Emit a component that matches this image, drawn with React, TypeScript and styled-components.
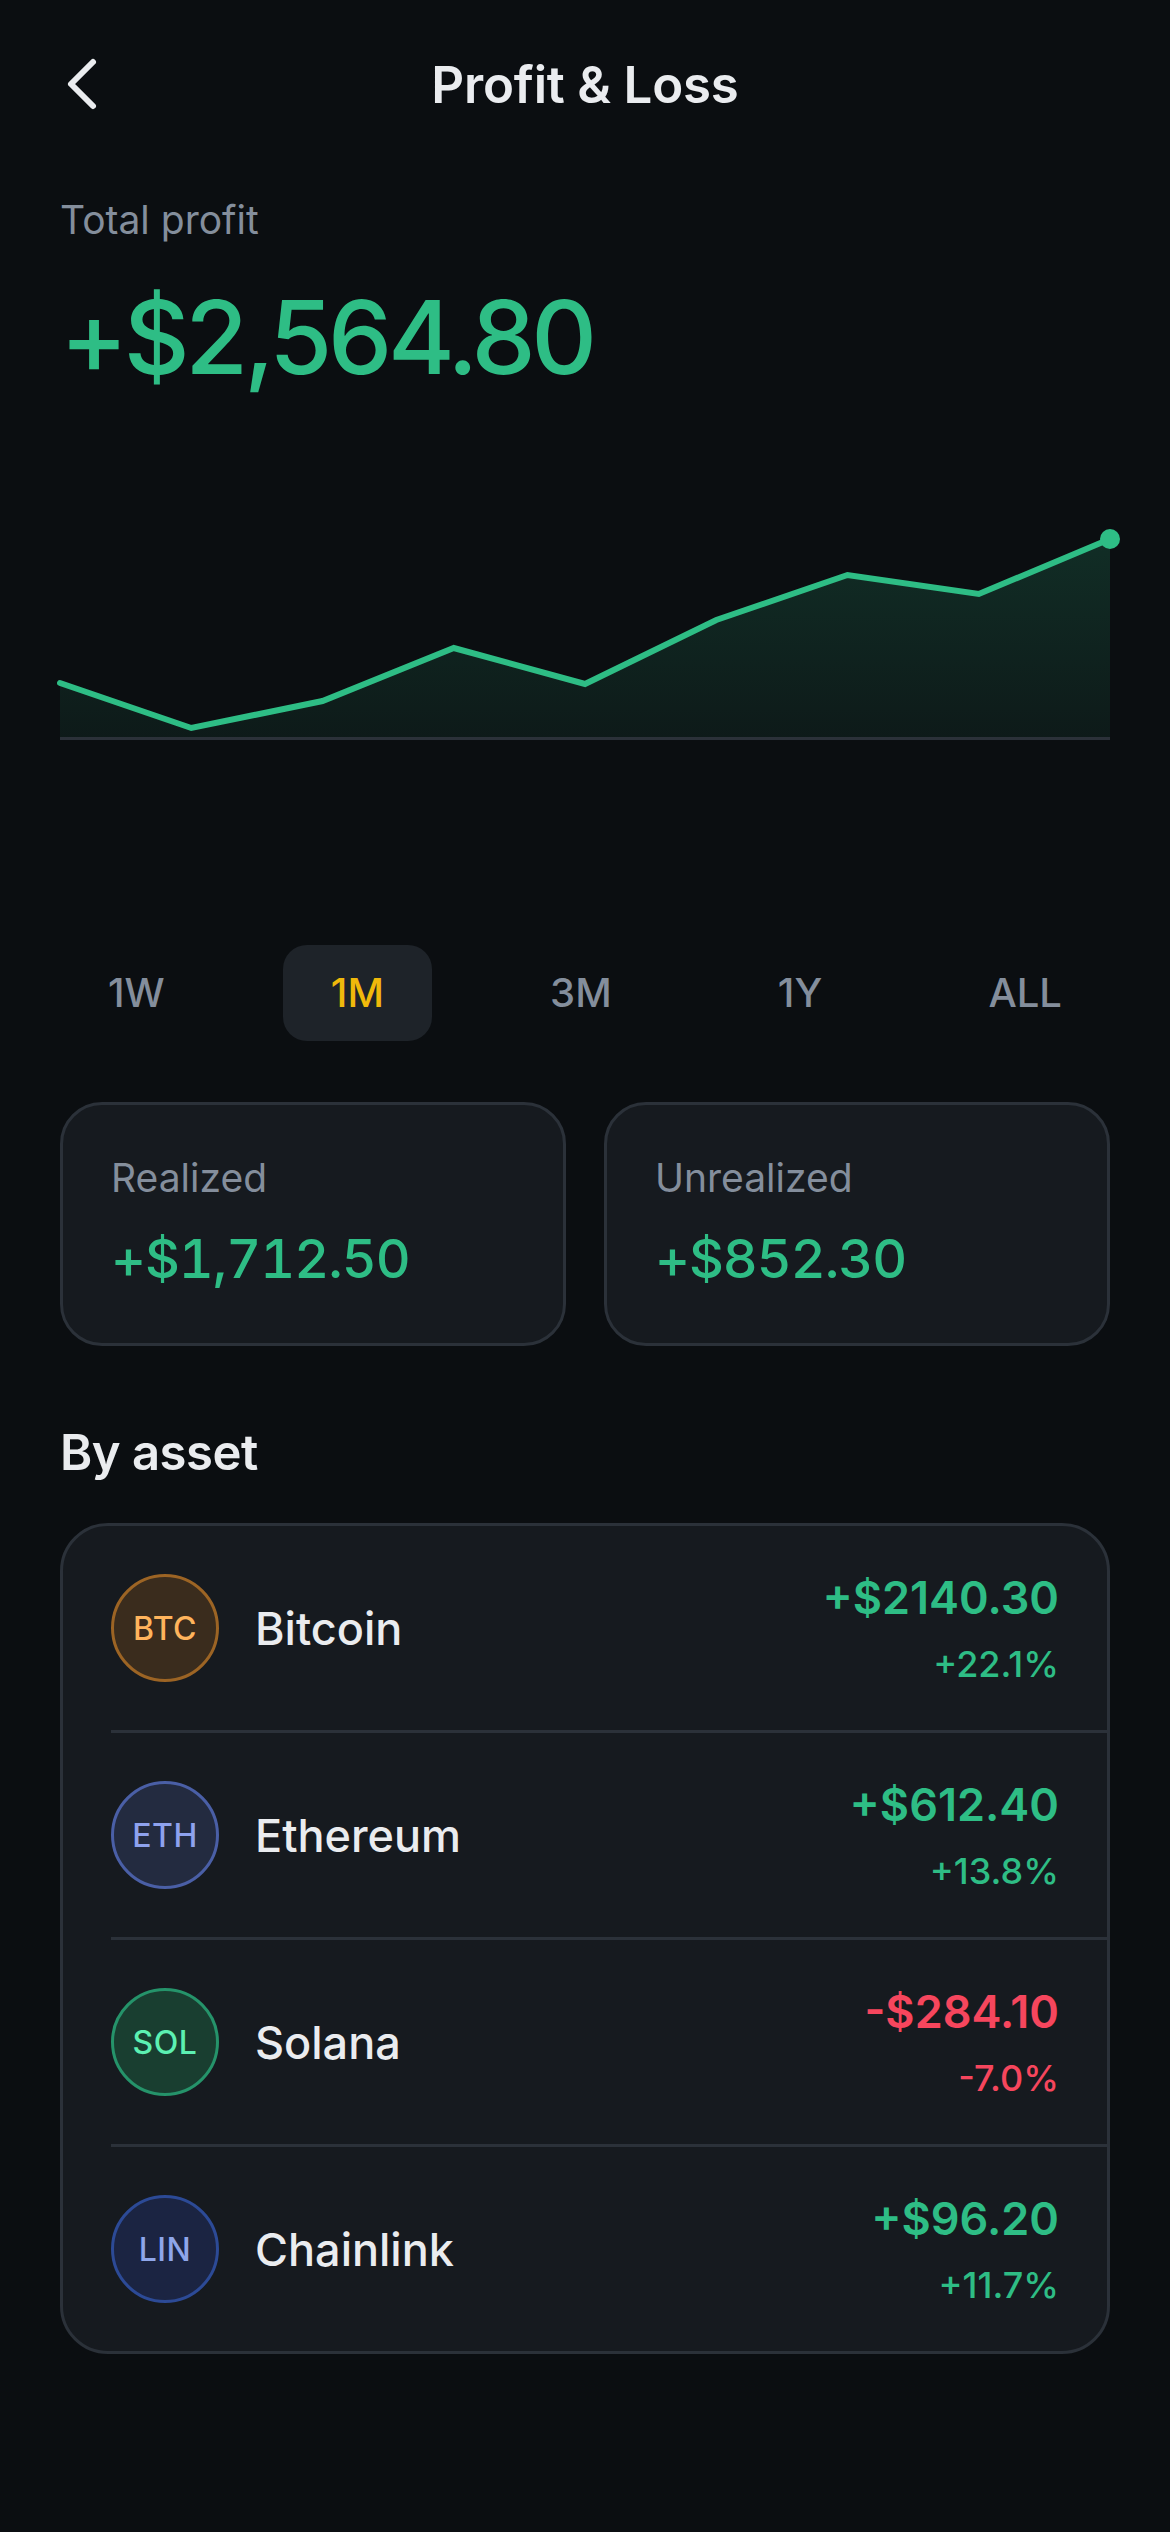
import React from "react";
import styled, { createGlobalStyle } from "styled-components";

const GlobalStyle = createGlobalStyle`
  html, body {
    margin: 0;
    padding: 0;
    background: #0b0e11;
  }
  body {
    font-family: Inter, "Noto Sans", "Liberation Sans", sans-serif;
    -webkit-font-smoothing: antialiased;
  }
  * { box-sizing: border-box; }
`;

const Page = styled.div`
  width: 1170px;
  min-height: 2532px;
  background: #0b0e11;
  padding: 0 60px;
  display: flex;
  flex-direction: column;
  color: #eaecef;
`;

const Header = styled.header`
  height: 168px;
  display: flex;
  align-items: center;
  justify-content: center;
  position: relative;
`;

const BackButton = styled.button`
  position: absolute;
  left: 0;
  top: 50%;
  transform: translateY(-50%);
  width: 60px;
  height: 60px;
  padding: 0;
  margin: 0;
  border: 0;
  background: transparent;
  display: flex;
  align-items: center;
  justify-content: flex-start;
  cursor: pointer;
`;

const Title = styled.h1`
  margin: 0;
  font-size: 51px;
  line-height: 1;
  font-weight: 600;
  color: #eaecef;
  letter-spacing: -0.2px;
`;

const Label = styled.div`
  font-size: 39px;
  line-height: 1;
  font-weight: 400;
  color: #848e9c;
`;

const TotalLabel = styled(Label)`
  margin-top: 32px;
`;

const BigAmount = styled.div`
  margin-top: 47px;
  font-size: 102px;
  line-height: 1;
  font-weight: 500;
  color: #2ebd85;
  letter-spacing: -4.3px;
`;

const ChartWrap = styled.div`
  margin-top: 12px;
  height: 360px;
  display: flex;
`;

const Tabs = styled.div`
  margin-top: 185px;
  display: flex;
  justify-content: space-between;
`;

const Tab = styled.button<{ $active?: boolean }>`
  height: 96px;
  padding: 0 48px;
  border: 0;
  border-radius: 24px;
  background: ${(p) => (p.$active ? "#1e2329" : "transparent")};
  color: ${(p) => (p.$active ? "#f0b90b" : "#848e9c")};
  font-family: inherit;
  font-size: 40px;
  font-weight: 500;
  line-height: 1;
  cursor: pointer;
`;

const StatsGrid = styled.div`
  margin-top: 61px;
  display: grid;
  grid-template-columns: 1fr 1fr;
  gap: 38px;
`;

const StatCard = styled.div`
  height: 244px;
  background: #161a1f;
  border: 3px solid #2b3139;
  border-radius: 42px;
  padding: 53px 48px 0;
  display: flex;
  flex-direction: column;
  gap: 35px;
`;

const StatValue = styled.div<{ $neg?: boolean }>`
  font-size: 54px;
  line-height: 1;
  font-weight: 500;
  font-variant-numeric: tabular-nums;
  letter-spacing: -1px;
  color: ${(p) => (p.$neg ? "#f6465d" : "#2ebd85")};
`;

const SectionTitle = styled.h2`
  margin: 82px 0 0;
  font-size: 49px;
  line-height: 1;
  font-weight: 600;
  letter-spacing: -0.5px;
  color: #eaecef;
`;

const AssetList = styled.div`
  margin-top: 46px;
  background: #161a1f;
  border: 3px solid #2b3139;
  border-radius: 48px;
  overflow: hidden;
`;

const AssetRow = styled.div<{ $last?: boolean }>`
  margin-left: 48px;
  height: ${(p) => (p.$last ? 204 : 207)}px;
  padding-right: 48px;
  display: flex;
  align-items: center;
  border-bottom: ${(p) => (p.$last ? "none" : "3px solid #2b3139")};
`;

const Coin = styled.div<{ $bg: string; $border: string; $fg: string }>`
  width: 108px;
  height: 108px;
  flex: 0 0 108px;
  border-radius: 50%;
  background: ${(p) => p.$bg};
  border: 3px solid ${(p) => p.$border};
  color: ${(p) => p.$fg};
  display: flex;
  align-items: center;
  justify-content: center;
  font-size: 32px;
  font-weight: 500;
  letter-spacing: 0.5px;
`;

const AssetName = styled.div`
  margin-left: 36px;
  flex: 1;
  font-size: 45px;
  line-height: 1;
  font-weight: 500;
  color: #eaecef;
`;

const AssetValues = styled.div`
  display: flex;
  flex-direction: column;
  align-items: flex-end;
  gap: 26px;
`;

const AssetAmount = styled.div<{ $neg?: boolean }>`
  font-size: 45px;
  line-height: 1;
  font-weight: 600;
  color: ${(p) => (p.$neg ? "#f6465d" : "#2ebd85")};
`;

const AssetPct = styled.div<{ $neg?: boolean }>`
  font-size: 36px;
  line-height: 1;
  font-weight: 500;
  color: ${(p) => (p.$neg ? "#f6465d" : "#2ebd85")};
`;

const ChevronLeft = () => (
  <svg width="40" height="56" viewBox="0 0 40 56" fill="none">
    <polyline
      points="33,6 11,28 33,50"
      stroke="#eaecef"
      strokeWidth="6"
      strokeLinecap="round"
      strokeLinejoin="round"
    />
  </svg>
);

const chartPoints = [283, 328, 301, 248, 284, 220, 175, 194, 139];

const ProfitChart = () => {
  const w = 1050;
  const base = 337;
  const step = w / (chartPoints.length - 1);
  const pts = chartPoints.map((y, i) => [i * step, y] as const);
  const line = pts.map(([x, y], i) => `${i === 0 ? "M" : "L"}${x.toFixed(1)},${y}`).join(" ");
  const area = `${line} L${w},${base} L0,${base} Z`;
  const last = pts[pts.length - 1];
  return (
    <svg width="1050" height="360" viewBox="0 0 1050 360" style={{ overflow: "visible" }}>
      <defs>
        <linearGradient id="pnlFill" x1="0" y1="0" x2="0" y2="1">
          <stop offset="0" stopColor="#2ebd85" stopOpacity="0.18" />
          <stop offset="1" stopColor="#2ebd85" stopOpacity="0.07" />
        </linearGradient>
      </defs>
      <path d={area} fill="url(#pnlFill)" />
      <line x1="0" y1={base + 1.5} x2={w} y2={base + 1.5} stroke="#2b3139" strokeWidth="3" />
      <path d={line} fill="none" stroke="#2ebd85" strokeWidth="6" strokeLinejoin="miter" strokeLinecap="round" />
      <circle cx={last[0]} cy={last[1]} r="10" fill="#2ebd85" />
    </svg>
  );
};

const periods = ["1W", "1M", "3M", "1Y", "ALL"];

const assets = [
  { sym: "BTC", name: "Bitcoin", amt: "+$2140.30", pct: "+22.1%", neg: false, bg: "#3a2c1d", border: "#9c6424", fg: "#ffb45c" },
  { sym: "ETH", name: "Ethereum", amt: "+$612.40", pct: "+13.8%", neg: false, bg: "#232b40", border: "#4a5fa6", fg: "#8ea2ee" },
  { sym: "SOL", name: "Solana", amt: "-$284.10", pct: "-7.0%", neg: true, bg: "#193e30", border: "#25936a", fg: "#5cf0b2" },
  { sym: "LIN", name: "Chainlink", amt: "+$96.20", pct: "+11.7%", neg: false, bg: "#1b2442", border: "#2c4a96", fg: "#8ea6ea" },
];

export default function App() {
  return (
    <>
      <GlobalStyle />
      <Page>
        <Header>
          <BackButton aria-label="Back">
            <ChevronLeft />
          </BackButton>
          <Title>Profit &amp; Loss</Title>
        </Header>

        <TotalLabel>Total profit</TotalLabel>
        <BigAmount>+$2,564.80</BigAmount>

        <ChartWrap>
          <ProfitChart />
        </ChartWrap>

        <Tabs>
          {periods.map((p) => (
            <Tab key={p} $active={p === "1M"}>
              {p}
            </Tab>
          ))}
        </Tabs>

        <StatsGrid>
          <StatCard>
            <Label>Realized</Label>
            <StatValue>+$1,712.50</StatValue>
          </StatCard>
          <StatCard>
            <Label>Unrealized</Label>
            <StatValue>+$852.30</StatValue>
          </StatCard>
        </StatsGrid>

        <SectionTitle>By asset</SectionTitle>

        <AssetList>
          {assets.map((a, i) => (
            <AssetRow key={a.sym} $last={i === assets.length - 1}>
              <Coin $bg={a.bg} $border={a.border} $fg={a.fg}>
                {a.sym}
              </Coin>
              <AssetName>{a.name}</AssetName>
              <AssetValues>
                <AssetAmount $neg={a.neg}>{a.amt}</AssetAmount>
                <AssetPct $neg={a.neg}>{a.pct}</AssetPct>
              </AssetValues>
            </AssetRow>
          ))}
        </AssetList>
      </Page>
    </>
  );
}
